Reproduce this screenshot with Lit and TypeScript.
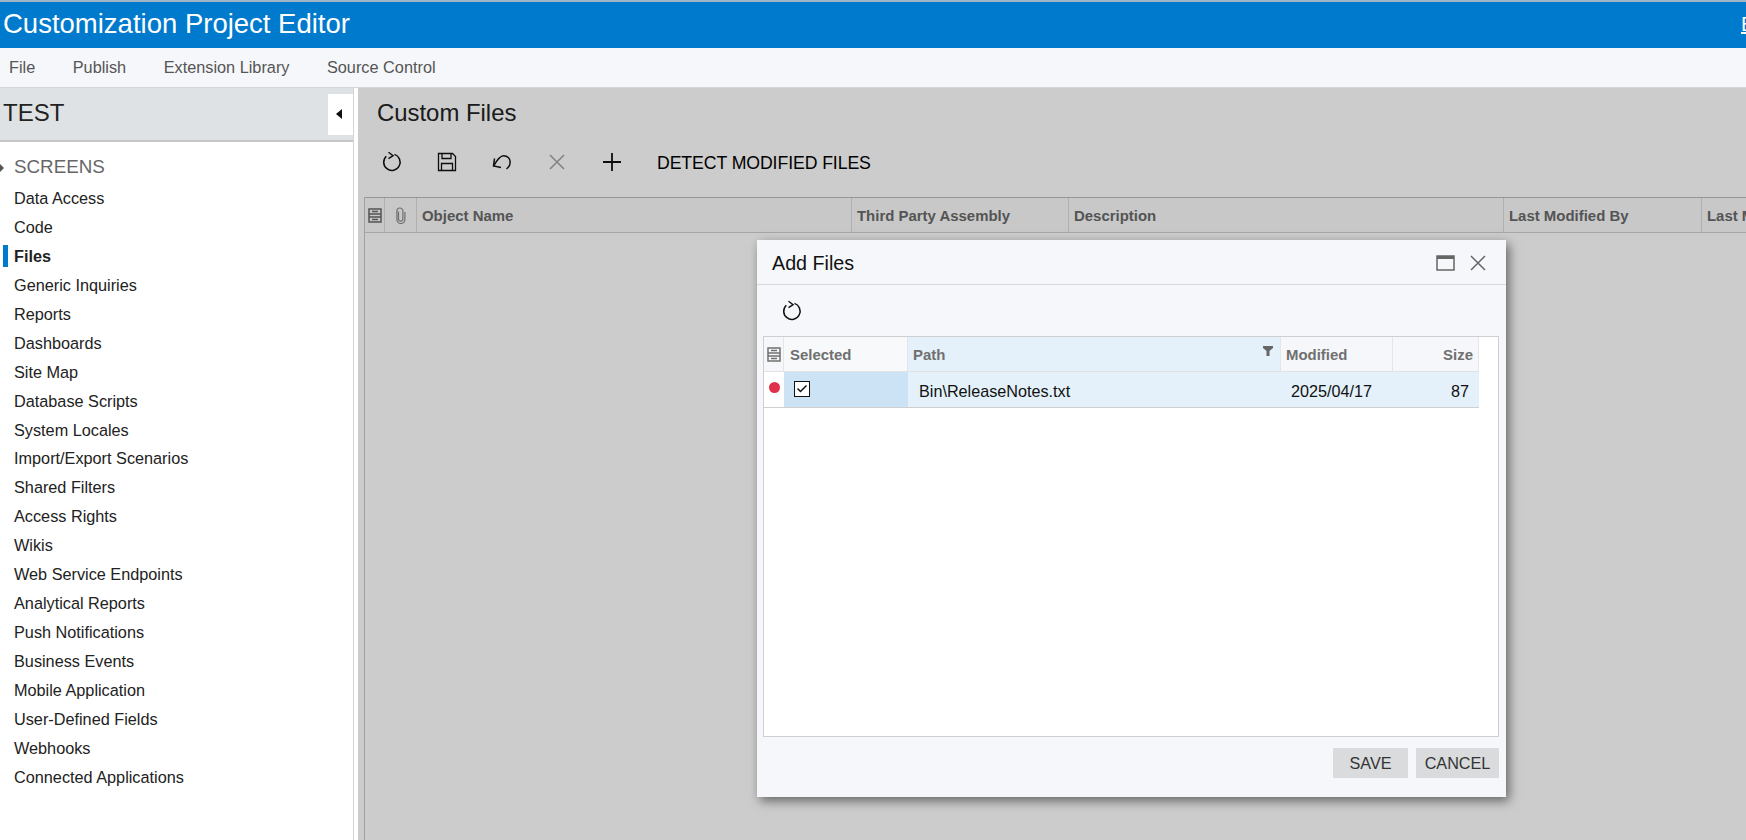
import { LitElement, html, css } from "lit";
import { customElement } from "lit/decorators.js";

const refresh = html`<svg width="22" height="22" viewBox="0 0 22 22" fill="none" stroke="currentColor" stroke-width="1.5"><path d="M13.500 3.400A8.200 8.200 0 1 1 5.300 5.200"/><path d="M7.500 1.200l4.600 3.500-4.600 3" stroke-width="1.4"/></svg>`;
const colIcon = html`<svg width="14" height="15" viewBox="0 0 14 15" fill="none" stroke="currentColor" stroke-width="1.5"><rect x="1" y="1" width="12" height="13"/><path d="M1 6h12M1 9h12M4 3.500h6M4 11.500h6"/></svg>`;
const clip = html`<svg width="13" height="17" viewBox="0 0 13 17" fill="none" stroke="currentColor" stroke-width="1.2"><path d="M4.500 4.500v7.500a2.200 2.200 0 0 0 4.400 0V4a3 3 0 0 0-6 0v8.500a4 4 0 0 0 8 0V5"/></svg>`;

const nav = ["Data Access","Code","Files","Generic Inquiries","Reports","Dashboards","Site Map","Database Scripts","System Locales","Import/Export Scenarios","Shared Filters","Access Rights","Wikis","Web Service Endpoints","Analytical Reports","Push Notifications","Business Events","Mobile Application","User-Defined Fields","Webhooks","Connected Applications"];

@customElement("app-root")
export class AppRoot extends LitElement {
  static styles = css`
    :host { display: flex; flex-direction: column; width: 1746px; height: 840px; overflow: hidden; position: relative; background: #fff; font-family: "Liberation Sans", Arial, sans-serif; color: #222; }
    .top { height: 46px; margin-top: 2px; flex: none; background: #007acc; box-shadow: 0 -2px 0 #9fb4c4; color: #fff; display: flex; align-items: center; justify-content: space-between; padding-left: 3px; font-size: 27.5px; line-height: 1; padding-bottom: 2px; box-sizing: border-box; }
    .top a { font-size: 20px; color: #fff; text-decoration: underline; margin-right: -8px; width: 13px; overflow: hidden; }
    .menu { height: 40px; flex: none; box-sizing: border-box; background: #f5f7fa; border-bottom: 1px solid #d5d5d5; display: flex; align-items: center; gap: 37.5px; padding-left: 9px; font-size: 16.3px; color: #555; }
    .body { flex: 1; display: flex; min-height: 0; position: relative; }
    .side { width: 354px; flex: none; box-sizing: border-box; border-right: 1px solid #d4d4d4; display: flex; flex-direction: column; }
    .side-h { height: 54px; flex: none; box-sizing: border-box; background: #dfe2e5; border-bottom: 2px solid #c4c6c8; display: flex; align-items: center; justify-content: space-between; padding-left: 3px; font-size: 24px; }
    .side-h span { margin-top: -2px; }
    .collapse { width: 25px; height: 41px; background: #fff; display: flex; align-items: center; justify-content: center; }
    .tri { width: 0; height: 0; border-style: solid; border-width: 5px 6px 5px 0; border-color: transparent #111 transparent transparent; margin-left: -4px; }
    .tree { padding: 10px 0 0 14px; position: relative; font-size: 16.25px; }
    .tree .root { font-size: 18.8px; color: #666; line-height: 29px; height: 32px; position: relative; }
    .tree .root::before { content: ""; position: absolute; left: -14px; top: 12px; border-style: solid; border-width: 4px 0 4px 4px; border-color: transparent transparent transparent #555; }
    .item { line-height: 28.95px; height: 28.95px; position: relative; }
    .item.on { font-weight: 700; }
    .item.on::before { content: ""; position: absolute; left: -11px; top: 3px; width: 5px; height: 22px; background: #007acc; }
    .gap { width: 4px; flex: none; }
    .main { flex: 1; min-width: 0; position: relative; overflow: hidden; padding: 0 0 0 6px; display: flex; flex-direction: column; }
    h1 { margin: 0; font-weight: 400; font-size: 23.9px; line-height: 28px; padding: 11px 0 0 13px; height: 38px; flex: none; }
    .bar { display: flex; align-items: center; height: 49px; margin-bottom: 11px; flex: none; color: #111; }
    .bar .ib { width: 55px; display: flex; align-items: center; justify-content: center; }
    .bar .t { font-size: 17.7px; margin: 3px 0 0 18px; color: #000; letter-spacing: -0.1px; }
    .muted { color: #a5a5a5; }
    .grid { flex: 1; border-left: 1px solid #c9c9c9; }
    .gh { display: flex; height: 36px; box-sizing: border-box; border-top: 1px solid #bdbdbd; border-bottom: 1px solid #d0d0d0; background: #fafbfb; font-weight: 700; font-size: 14.95px; color: #6a6a6a; width: 1500px; }
    .gh > div { box-sizing: border-box; border-right: 1px solid #dcdcdc; display: flex; align-items: center; padding-left: 5px; flex: none; }
    .gh .ic { justify-content: center; padding: 0; }
    .gh .ic.clip { color: #8a8a8a; }
    .scrim { position: absolute; inset: 0 0 0 358px; background: rgba(0,0,0,.2); }
    .dlg { position: absolute; left: 757px; top: 152px; width: 749px; height: 557px; box-sizing: border-box; background: #f5f7fa; box-shadow: 3px 4px 10px rgba(0,0,0,.5); display: flex; flex-direction: column; padding: 0 7px 0 6px; }
    .dh { height: 45px; flex: none; margin: 0 -7px 0 -6px; box-sizing: border-box; border-bottom: 1px solid #d8d8d8; display: flex; align-items: center; justify-content: space-between; padding: 2px 20px 0 15px; font-size: 19.7px; color: #111; }
    .dh .acts { display: flex; align-items: center; gap: 15px; color: #666; }
    .dbar { height: 51px; flex: none; display: flex; align-items: center; padding: 1px 0 0 18px; color: #111; box-sizing: border-box; }
    .dgrid { flex: 1; min-height: 0; background: #fff; border: 1px solid #cfcfcf; box-sizing: border-box; }
    .r { display: flex; height: 36px; box-sizing: border-box; width: 715px; }
    .r > div { box-sizing: border-box; flex: none; display: flex; align-items: center; }
    .r.h { height: 35px; font-weight: 700; font-size: 14.95px; color: #707070; border-bottom: 1px solid #e2e2e2; background: #f5f7fa; }
    .r.h > div { border-right: 1px solid #e6e6e6; padding-left: 6px; position: relative; }
    .r.h .path { background: #e4f1fa; padding-left: 5px; }
    .r.h .sel { background: #f7f9fb; }
    .funnel { position: absolute; right: 7px; top: 9px; width: 10px; height: 10px; }
    .r.d { font-size: 16.2px; background: #e4f1fa; color: #111; border-bottom: 1px solid #cfcfcf; }
    .r.d > div { padding: 4px 0 0 11px; }
    .r.d .ind { background: #fff; padding: 0 0 4px 5px; }
    .r.d .sel { background: #cce3f5; padding: 0 0 2px 10px; }
    .dot { width: 11px; height: 11px; border-radius: 50%; background: #e0304a; }
    .cb { width: 14px; height: 14px; border: 1.5px solid #111; background: #fff; display: flex; }
    .right { justify-content: flex-end; padding-right: 5px !important; padding-left: 0 !important; }
    .r.d .right { padding-right: 10px !important; }
    .foot { height: 60px; flex: none; display: flex; justify-content: flex-end; gap: 8px; padding-top: 11px; box-sizing: border-box; }
    .btn { height: 30px; background: #d9dbdd; display: flex; align-items: center; justify-content: center; font-size: 16.2px; color: #333; }
    .btn.s { width: 75px; }
    .btn.c { width: 83px; }
  `;

  render() {
    const colsMain: [string, number][] = [["Object Name", 435], ["Third Party Assembly", 217], ["Description", 435], ["Last Modified By", 198], ["Last Modified On", 160]];
    return html`
      <div class="top"><span>Customization Project Editor</span><a>Exit</a></div>
      <div class="menu"><span>File</span><span>Publish</span><span>Extension Library</span><span>Source Control</span></div>
      <div class="body">
        <div class="side">
          <div class="side-h"><span>TEST</span><div class="collapse"><div class="tri"></div></div></div>
          <div class="tree">
            <div class="root">SCREENS</div>
            ${nav.map((n) => html`<div class="item ${n === "Files" ? "on" : ""}">${n}</div>`)}
          </div>
        </div>
        <div class="gap"></div>
        <div class="main">
          <h1>Custom Files</h1>
          <div class="bar">
            <span class="ib">${refresh}</span>
            <span class="ib"><svg width="20" height="20" viewBox="0 0 20 20" fill="none" stroke="currentColor" stroke-width="1.3"><path d="M1.500 1.500h14l3 3v14h-17z"/><path d="M5 1.500v5h9v-5M4.500 18.500v-7h11v7"/></svg></span>
            <span class="ib"><svg width="21" height="20" viewBox="0 0 21 20" fill="none" stroke="currentColor" stroke-width="1.5"><path d="M3.500 6.500L2.500 14 10 15.500"/><path d="M2.500 14C6 8 9 3.700 12.500 3.700 16.500 3.700 19.200 6.500 19.200 10 19.200 13 17.500 15.500 15.500 17"/></svg></span>
            <span class="ib muted"><svg width="20" height="20" viewBox="0 0 20 20" fill="none" stroke="currentColor" stroke-width="1.6"><path d="M3 3l14 14M17 3L3 17"/></svg></span>
            <span class="ib"><svg width="20" height="20" viewBox="0 0 20 20" fill="none" stroke="currentColor" stroke-width="1.8"><path d="M10 1v18M1 10h18"/></svg></span>
            <span class="t">DETECT MODIFIED FILES</span>
          </div>
          <div class="grid">
            <div class="gh">
              <div class="ic" style="width:20px">${colIcon}</div>
              <div class="ic clip" style="width:32px">${clip}</div>
              ${colsMain.map(([t, w]) => html`<div style="width:${w}px">${t}</div>`)}
            </div>
          </div>
        </div>
        <div class="scrim"></div>
        <div class="dlg">
          <div class="dh"><span>Add Files</span><div class="acts">
            <svg width="19" height="16" viewBox="0 0 19 16" fill="none" stroke="currentColor"><rect x="1" y="1" width="17" height="14" stroke-width="1.5"/><path d="M1 2.500h17" stroke-width="3"/></svg>
            <svg width="16" height="16" viewBox="0 0 16 16" fill="none" stroke="currentColor" stroke-width="1.5"><path d="M1 1l14 14M15 1L1 15"/></svg>
          </div></div>
          <div class="dbar">${refresh}</div>
          <div class="dgrid">
            <div class="r h">
              <div style="width:20px;padding-left:3px">${colIcon}</div>
              <div class="sel" style="width:124px">Selected</div>
              <div class="path" style="width:373px">Path<svg class="funnel" viewBox="0 0 10 10" fill="#666"><path d="M0 0h10v2L6.500 5v5h-3V5L0 2z"/></svg></div>
              <div style="width:112px;padding-left:5px">Modified</div>
              <div class="right" style="width:86px">Size</div>
            </div>
            <div class="r d">
              <div class="ind" style="width:20px"><span class="dot"></span></div>
              <div class="sel" style="width:124px"><span class="cb"><svg viewBox="0 0 14 14" fill="none" stroke="#111" stroke-width="1.500"><path d="M2.500 6.500l3 3 6-6"/></svg></span></div>
              <div style="width:373px">Bin\\ReleaseNotes.txt</div>
              <div style="width:112px;padding-left:10px">2025/04/17</div>
              <div class="right" style="width:86px">87</div>
            </div>
          </div>
          <div class="foot"><div class="btn s">SAVE</div><div class="btn c">CANCEL</div></div>
        </div>
      </div>
    `;
  }
}
